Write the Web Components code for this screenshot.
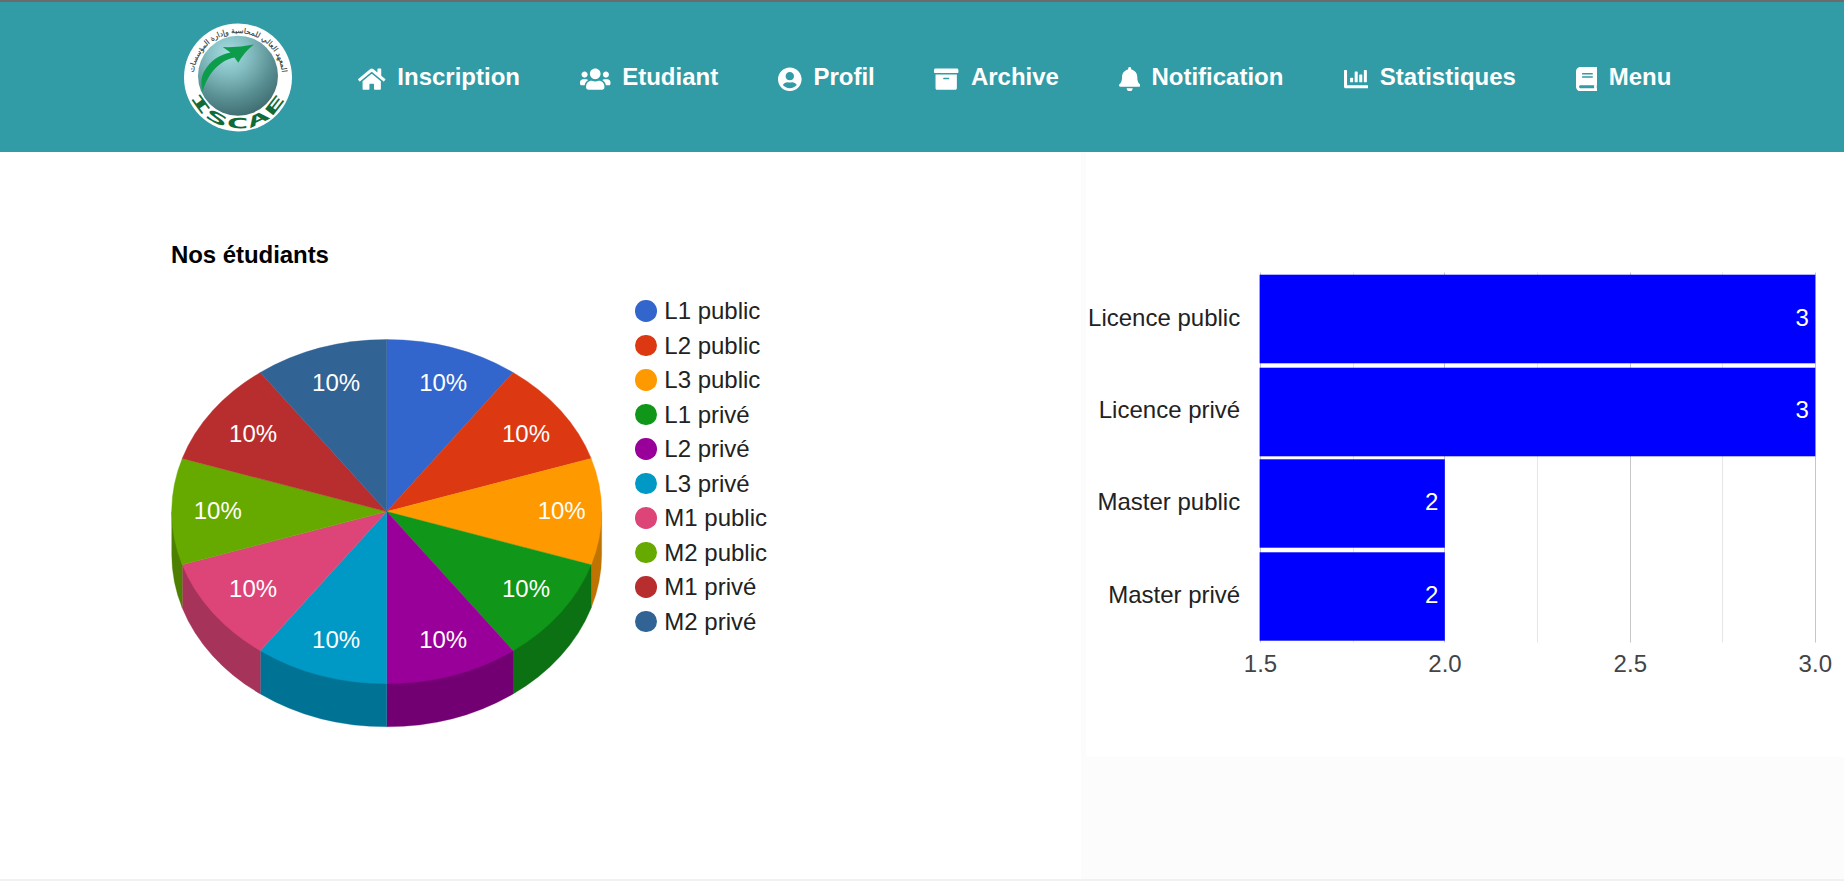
<!DOCTYPE html>
<html lang="fr">
<head>
<meta charset="utf-8">
<title>ISCAE - Statistiques</title>
<style>
html,body{margin:0;height:100%;overflow:hidden;background:#fff}
body{font:24px/28px "Liberation Sans",Arial,sans-serif;color:#222}
</style>
</head>
<body>
<iscae-page>
  <iscae-header slot="header">
    <nav-item icon="home">Inscription</nav-item>
    <nav-item icon="users">Etudiant</nav-item>
    <nav-item icon="user">Profil</nav-item>
    <nav-item icon="archive">Archive</nav-item>
    <nav-item icon="bell">Notification</nav-item>
    <nav-item icon="chart">Statistiques</nav-item>
    <nav-item icon="book">Menu</nav-item>
  </iscae-header>
  <student-pie>Nos étudiants</student-pie>
  <level-bars slot="side"></level-bars>
</iscae-page>
<script>
class Base extends HTMLElement {
  render(html) { this.attachShadow({ mode: 'open' }).innerHTML = html; }
}

customElements.define('iscae-page', class extends Base {
  connectedCallback() {
    this.render(`<style>
      :host{display:flex;flex-direction:column;box-sizing:border-box;height:881px;width:1844px;border-bottom:2px solid #f1f1f1}
      main{flex:1;display:grid;grid-template-columns:1081px 1fr;min-height:0}
      aside{background:#fcfcfc;padding-left:5px}
    </style><slot name="header"></slot><main><section><slot></slot></section><aside><slot name="side"></slot></aside></main>`);
  }
});

customElements.define('iscae-logo', class extends Base {
  connectedCallback() {
    this.render(`<style>:host{display:block;width:110px;height:110px}svg{display:block}</style>
    <svg width="110" height="110" viewBox="-55 -55.4 110 110">
      <defs>
        <radialGradient id="s" cx=".38" cy=".22" r=".85"><stop offset="0" stop-color="#a5dde1"/><stop offset=".3" stop-color="#86bfc3"/><stop offset=".65" stop-color="#5a9195"/><stop offset="1" stop-color="#3b676a"/></radialGradient>
        <path id="top" d="M-41.500 15.500A44.300 44.300 0 1 1 41.500 15.500"/>
        <path id="bot" d="M-47 19.500A51 51 0 0 0 46.500 21"/>
      </defs>
      <circle r="54" fill="#fff"/>
      <circle cy="-1.7" r="40" fill="url(#s)"/>
      <path d="M-35.300 14.300C-37.500 5-37-1-33-7.500C-28-16-19-23-7.500-25L-15.300-30.300Q0-29.500 15.800-32.800Q6-25 .3-14.600L-3.500-20C-16-18-30-6-35.300 14.300Z" fill="#0c9c4c"/>
      <text font-family="DejaVu Sans" font-size="7.4" fill="#2f3c35" stroke="#2f3c35" stroke-width=".15" text-anchor="middle"><textPath href="#top" startOffset="50%">المعهد العالي للمحاسبة وإدارة المؤسسات</textPath></text>
      <text font-family="DejaVu Sans Mono" font-weight="bold" font-size="14" fill="#116b39"><textPath href="#bot" textLength="118" lengthAdjust="spacingAndGlyphs">ISCAE</textPath></text>
    </svg>`);
  }
});

customElements.define('iscae-header', class extends Base {
  connectedCallback() {
    this.render(`<style>
      :host{display:flex;align-items:center;box-sizing:border-box;height:152px;flex:none;background:#319ba6;border-top:2px solid #6b6b6b;padding-left:183px}
      nav{display:grid;grid-template-columns:221.9px 198px 156.200px 184.400px 224.800px 232.200px 130px;margin-left:65.300px}
    </style><iscae-logo></iscae-logo><nav><slot></slot></nav>`);
  }
});

const ICONS = {
  home: [576, 39, '<path d="M280.37 148.26L96 300.11V464a16 16 0 0 0 16 16l112.06-.29a16 16 0 0 0 15.92-16V368a16 16 0 0 1 16-16h64a16 16 0 0 1 16 16v95.64a16 16 0 0 0 16 16.05L464 480a16 16 0 0 0 16-16V300L295.67 148.26a12.19 12.19 0 0 0-15.3 0zM571.6 251.47L488 182.56V44.05a12 12 0 0 0-12-12h-56a12 12 0 0 0-12 12v72.61L318.47 43a48 48 0 0 0-61 0L4.34 251.47a12 12 0 0 0-1.6 16.9l25.5 31A12 12 0 0 0 45.15 301l235.22-193.74a12.19 12.19 0 0 1 15.3 0L530.9 301a12 12 0 0 0 16.9-1.6l25.5-31a12 12 0 0 0-1.7-16.93z"/>'],
  users: [640, 42, '<path d="M96 224c35.3 0 64-28.7 64-64s-28.7-64-64-64-64 28.7-64 64 28.7 64 64 64zm448 0c35.3 0 64-28.7 64-64s-28.7-64-64-64-64 28.7-64 64 28.7 64 64 64zm32 32h-64c-17.6 0-33.5 7.1-45.1 18.6 40.3 22.1 68.9 62 75.1 109.4h66c17.7 0 32-14.3 32-32v-32c0-35.3-28.7-64-64-64zm-256 0c61.9 0 112-50.1 112-112S381.9 32 320 32 208 82.1 208 144s50.1 112 112 112zm76.8 32h-8.3c-20.8 10-43.9 16-68.5 16s-47.6-6-68.5-16h-8.3C179.6 288 128 339.6 128 403.2V432c0 26.5 21.5 48 48 48h288c26.5 0 48-21.5 48-48v-28.8c0-63.6-51.6-115.2-115.2-115.2zm-223.7-13.4C161.5 263.1 145.6 256 128 256H64c-35.3 0-64 28.7-64 64v32c0 17.7 14.3 32 32 32h65.9c6.3-47.4 34.9-87.3 75.2-109.4z"/>'],
  user: [496, 35.2, '<path d="M248 8C111 8 0 119 0 256s111 248 248 248 248-111 248-248S385 8 248 8zm0 96c48.6 0 88 39.4 88 88s-39.4 88-88 88-88-39.4-88-88 39.4-88 88-88zm0 344c-58.7 0-111.3-26.6-146.5-68.2 18.8-35.4 55.600-59.8 98.5-59.8 2.4 0 4.800.4 7.100 1.1 13 4.200 26.600 6.900 40.900 6.900 14.300 0 28-2.700 40.900-6.900 2.300-.7 4.700-1.100 7.100-1.100 42.900 0 79.700 24.400 98.500 59.800C359.300 421.400 306.700 448 248 448z"/>'],
  archive: [512, 36.5, '<path d="M32 448c0 17.700 14.300 32 32 32h384c17.700 0 32-14.300 32-32V160H32v288zm160-212c0-6.600 5.400-12 12-12h104c6.600 0 12 5.400 12 12v8c0 6.600-5.400 12-12 12H204c-6.600 0-12-5.400-12-12v-8zM480 32H32C14.300 32 0 46.300 0 64v48c0 8.800 7.200 16 16 16h480c8.800 0 16-7.200 16-16V64c0-17.700-14.300-32-32-32z"/>'],
  bell: [448, 32.7, '<path d="M224 512c35.320 0 63.970-28.650 63.970-64H160.030c0 35.350 28.650 64 63.970 64zm215.390-149.710c-19.320-20.760-55.470-51.990-55.470-154.290 0-77.700-54.480-139.900-127.940-155.160V32c0-17.670-14.320-32-31.980-32s-31.980 14.330-31.980 32v20.840C118.560 68.100 64.080 130.300 64.080 208c0 102.300-36.150 133.530-55.470 154.290-6 6.450-8.660 14.160-8.610 21.710.11 16.400 12.980 32 32.100 32h383.800c19.120 0 32-15.600 32.100-32 .05-7.550-2.610-15.270-8.610-21.710z"/>'],
  chart: [512, 36.3, '<path d="M332.800 320h38.400c6.400 0 12.800-6.400 12.800-12.800V172.800c0-6.400-6.400-12.800-12.800-12.800h-38.400c-6.400 0-12.800 6.400-12.800 12.800v134.400c0 6.400 6.400 12.800 12.800 12.800zm96 0h38.400c6.400 0 12.800-6.400 12.800-12.800V76.800c0-6.400-6.400-12.800-12.800-12.800h-38.400c-6.400 0-12.800 6.400-12.800 12.800v230.400c0 6.400 6.400 12.800 12.800 12.800zm-288 0h38.400c6.400 0 12.800-6.400 12.800-12.800v-70.400c0-6.400-6.400-12.800-12.800-12.800h-38.400c-6.400 0-12.800 6.400-12.800 12.800v70.400c0 6.400 6.400 12.800 12.800 12.800zm96 0h38.400c6.400 0 12.800-6.400 12.800-12.800V108.800c0-6.400-6.400-12.800-12.800-12.800h-38.400c-6.400 0-12.800 6.400-12.800 12.800v198.400c0 6.400 6.400 12.800 12.800 12.800zM496 384H64V80c0-8.840-7.160-16-16-16H16C7.160 64 0 71.160 0 80v336c0 17.670 14.330 32 32 32h464c8.840 0 16-7.160 16-16v-32c0-8.840-7.160-16-16-16z"/>'],
  book: [448, 33, '<path d="M448 360V24c0-13.300-10.700-24-24-24H96C43 0 0 43 0 96v320c0 53 43 96 96 96h328c13.300 0 24-10.700 24-24v-16c0-7.500-3.500-14.300-8.900-18.700-4.200-15.400-4.200-59.300 0-74.700 5.400-4.300 8.900-11.100 8.900-18.600zM128 134c0-3.300 2.700-6 6-6h212c3.300 0 6 2.700 6 6v20c0 3.300-2.700 6-6 6H134c-3.300 0-6-2.700-6-6v-20zm0 64c0-3.300 2.700-6 6-6h212c3.300 0 6 2.700 6 6v20c0 3.300-2.700 6-6 6H134c-3.300 0-6-2.700-6-6v-20zm253.400 250H96c-17.700 0-32-14.300-32-32 0-17.600 14.400-32 32-32h285.400c-1.900 17.100-1.900 46.900 0 64z"/>']
};
customElements.define('nav-item', class extends Base {
  connectedCallback() {
    const [w, cell, path] = ICONS[this.getAttribute('icon')];
    this.render(`<style>
      :host{display:grid;grid-template-columns:${cell}px auto;justify-content:start;align-items:center;height:28px;color:#fff;font-weight:bold;white-space:nowrap}
      svg{display:block;fill:currentColor;margin-top:3.500px}
    </style><svg width="${w * 24.4 / 512}" height="24.4" viewBox="0 0 ${w} 512">${path}</svg><span><slot></slot></span>`);
  }
});

const SLICES = [
  ['L1 public', '#3366cc', '#264d99', 443.2, 391], ['L2 public', '#dc3912', '#a52b0e', 526, 441.7],
  ['L3 public', '#ff9900', '#bf7300', 561.7, 519], ['L1 privé', '#109618', '#0c7112', 526, 596.7],
  ['L2 privé', '#990099', '#730073', 443.2, 647.7], ['L3 privé', '#0099c6', '#007395', 336.1, 647.7],
  ['M1 public', '#dd4477', '#a63359', 253.1, 596.7], ['M2 public', '#66aa00', '#4d8000', 217.8, 519],
  ['M1 privé', '#b82e2e', '#8a2323', 253.1, 441.7], ['M2 privé', '#316395', '#254a70', 336.1, 391]
];
customElements.define('student-pie', class extends Base {
  connectedCallback() {
    const cx = 386.7, cy = 511.6, rx = 215, ry = 172, depth = 43.2;
    const at = (a) => [cx + rx * Math.sin(a), cy - ry * Math.cos(a)];
    let tops = '', sides = '', labels = '';
    SLICES.forEach(([, color, dark, lx, ly], i) => {
      const a = i * Math.PI / 5, b = a + Math.PI / 5;
      const [x1, y1] = at(a), [x2, y2] = at(b);
      tops += `<path fill="${color}" stroke="${color}" stroke-width=".4" d="M${cx} ${cy}L${x1} ${y1}A${rx} ${ry} 0 0 1 ${x2} ${y2}Z"/>`;
      const s = Math.max(a, Math.PI / 2), e = Math.min(b, Math.PI * 1.5);
      if (e > s) {
        const [u, v] = at(s), [p, q] = at(e);
        // The straight upper edge lies under the top face, so no seam shows along the rim.
        sides += `<path fill="${dark}" stroke="${dark}" stroke-width=".3" d="M${u} ${v}L${p} ${q}V${q + depth}A${rx} ${ry} 0 0 0 ${u} ${v + depth}Z"/>`;
      }
      labels += `<text x="${lx}" y="${ly}">10%</text>`;
    });
    const rows = SLICES.map(([name, color]) => `<li><i style="background:${color}"></i>${name}</li>`).join('');
    this.render(`<style>
      :host{display:grid;grid-template-columns:440px 1fr;grid-template-rows:36px auto;column-gap:24.300px;padding:89px 0 0 171px}
      h2{margin:0;font:bold 24px/28px "Liberation Sans",Arial,sans-serif;letter-spacing:-.06px;color:#000;grid-column:1/3}
      svg{display:block;margin-top:53px}
      text{fill:#fff;text-anchor:middle;font-size:24px}
      ul{list-style:none;margin:16.800px 0 0;padding:0}
      li{display:flex;align-items:center;height:34.500px;white-space:nowrap}
      i{width:21.400px;height:21.400px;border-radius:50%;margin-right:7.600px}
    </style><h2><slot></slot></h2>
    <svg width="440" height="400" viewBox="171 330 440 400">${sides}${tops}${labels}</svg>
    <ul>${rows}</ul>`);
  }
});

customElements.define('level-bars', class extends Base {
  connectedCallback() {
    const grid = [[1260, 1], [1353, 0], [1444, 1], [1537, 0], [1630, 1], [1722, 0], [1815, 1]]
      .map(([x, major]) => `<rect x="${x}" y="272.500" width="1" height="370" fill="${major ? '#c6c6c6' : '#e6e6e6'}"/>`).join('');
    const bars = [['Licence public', 3, 274.7, 88.600, 326], ['Licence privé', 3, 367.7, 88.600, 418],
      ['Master public', 2, 459.300, 88.400, 510.400], ['Master privé', 2, 552.300, 88.400, 602.700]]
      .map(([name, n, y, h, base]) => {
        const end = n === 3 ? 1815.3 : 1444.800;
        return `<rect x="1259.6" y="${y}" width="${end - 1259.6}" height="${h}" fill="#00f"/>
          <text x="1240.200" y="${base}" text-anchor="end">${name}</text>
          <text x="${end - 6.400}" y="${base}" text-anchor="end" fill="#fff">${n}</text>`;
      }).join('');
    const axis = [['1.5', 1260.500], ['2.0', 1445], ['2.5', 1630.3], ['3.0', 1815.3]]
      .map(([t, x]) => `<text x="${x}" y="672" text-anchor="middle" fill="#444">${t}</text>`).join('');
    this.render(`<style>
      :host{display:block;height:605px;background:#fff}
      svg{display:block;font-size:24px;fill:#222}
    </style><svg width="758" height="605" viewBox="1086 152 758 605">${grid}${bars}${axis}</svg>`);
  }
});
</script>
</body>
</html>
